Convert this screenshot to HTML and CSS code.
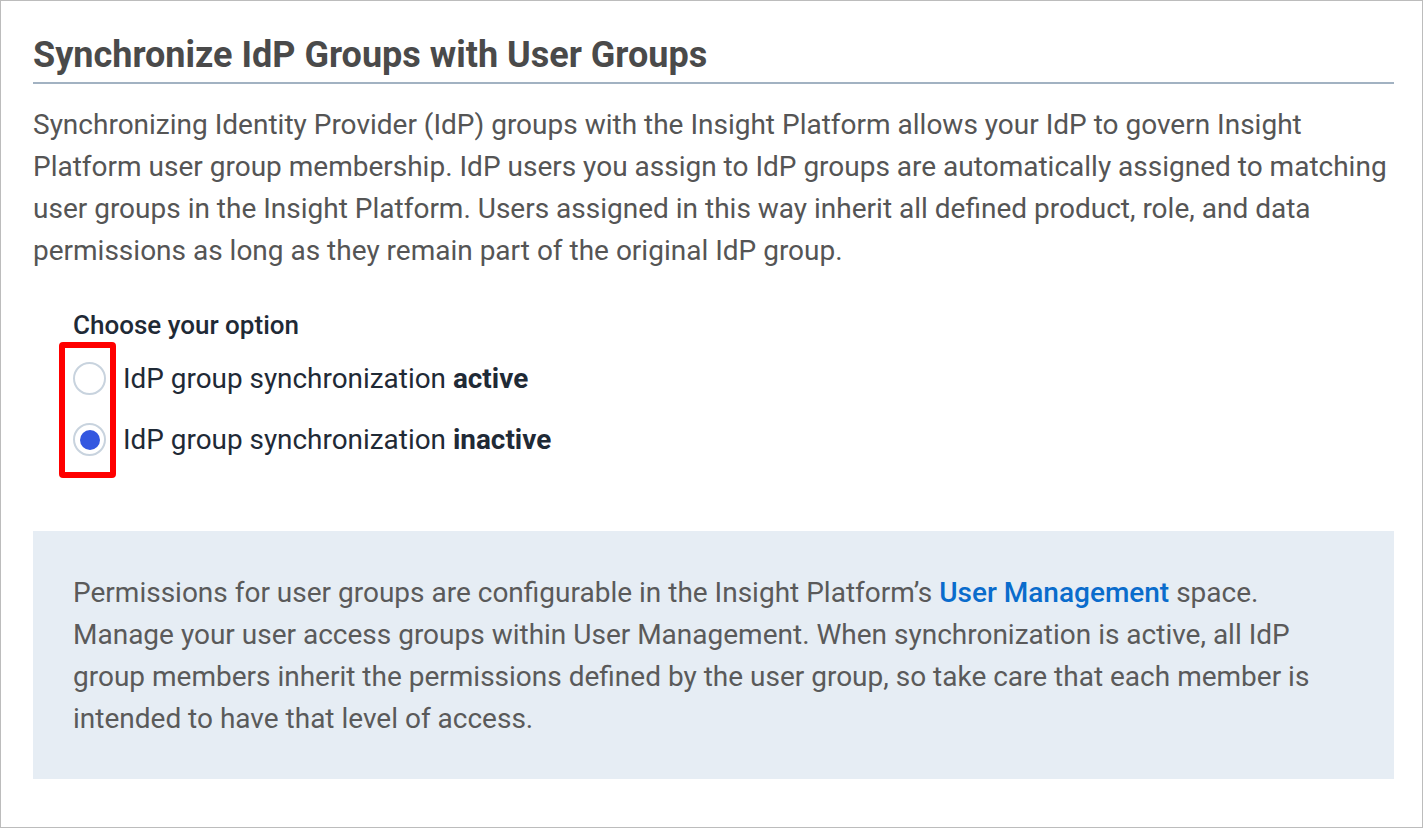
FILE: index.html
```html
<!DOCTYPE html>
<html lang="en">
<head>
  <meta charset="UTF-8">
  <meta name="viewport" content="width=device-width, initial-scale=1.0">
  <title>Synchronize IdP Groups with User Groups</title>
  <link rel="stylesheet" href="styles.css">
</head>
<body>
  <div class="panel">
    <h2 class="panel-title">Synchronize IdP Groups with User Groups</h2>
    <p class="intro">
      Synchronizing Identity Provider (IdP) groups with the Insight Platform allows your IdP to govern Insight
      Platform user group membership. IdP users you assign to IdP groups are automatically assigned to matching
      user groups in the Insight Platform. Users assigned in this way inherit all defined product, role, and data
      permissions as long as they remain part of the original IdP group.
    </p>

    <div class="options">
      <div class="options-label">Choose your option</div>
      <label class="option">
        <span class="radio"></span>
        <span>IdP group synchronization <b>active</b></span>
      </label>
      <label class="option">
        <span class="radio checked"></span>
        <span>IdP group synchronization <b>inactive</b></span>
      </label>
      <!-- highlight around the radio buttons -->
      <div class="highlight"></div>
    </div>

    <div class="note">
      Permissions for user groups are configurable in the Insight Platform’s <a href="#">User Management</a> space.
      Manage your user access groups within User Management. When synchronization is active, all IdP
      group members inherit the permissions defined by the user group, so take care that each member is
      intended to have that level of access.
    </div>
  </div>
</body>
</html>
```

FILE: styles.css
```css
body {
  margin: 0;
  font-family: Roboto, "Liberation Sans", Arial, sans-serif;
  background-color: #fff;
}

.panel {
  width: 1423px;
  height: 828px;
  border: 1px solid #bcbcbc;
  padding: 0 28px 0 32px;
  box-sizing: border-box;
}

.panel-title {
  margin: 0;
  padding-top: 34px;
  padding-bottom: 7px;
  font-size: 36px;
  line-height: 40px;
  font-weight: 700;
  color: #4a4a4a;
  border-bottom: 2px solid #a2b2c2;
}

.intro {
  margin: 20px 0 0;
  font-size: 28px;
  line-height: 42px;
  color: #555;
}

.options {
  position: relative;
  margin-top: 38px;
  padding-left: 40px;
}

.options-label {
  font-size: 26px;
  font-weight: 500;
  line-height: 30px;
  color: #1f2a36;
  margin-bottom: 8px;
}

.option {
  display: flex;
  align-items: center;
  gap: 17px;
  height: 61px;
  font-size: 27.9px;
  color: #1f2a36;
}

.radio {
  flex-shrink: 0;
  width: 33px;
  height: 33px;
  border: 2px solid #c8d3de;
  border-radius: 50%;
  box-sizing: border-box;
  display: flex;
  align-items: center;
  justify-content: center;
  background: #fff;
}

.radio.checked::after {
  content: "";
  width: 20px;
  height: 20px;
  border-radius: 50%;
  background-color: #3357e0;
}

.highlight {
  position: absolute;
  left: 26px;
  top: 32px;
  width: 57px;
  height: 136px;
  border: 6px solid #f00;
  border-radius: 4px;
  box-sizing: border-box;
}

.note {
  margin-top: 61px;
  background-color: #e6edf4;
  padding: 41px 40px 40px;
  font-size: 28px;
  line-height: 42px;
  color: #5a5a5a;
  height: 248px;
  box-sizing: border-box;
}

.note a {
  color: #0a6ccc;
  font-weight: 500;
  text-decoration: none;
}
```
